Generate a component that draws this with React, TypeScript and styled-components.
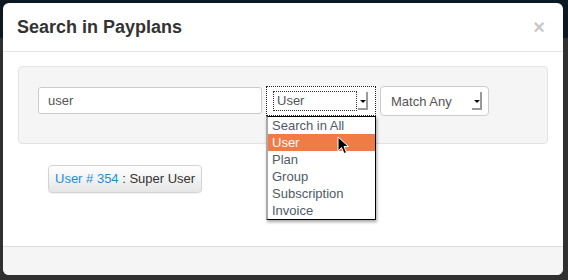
import React from "react";
import styled, { createGlobalStyle } from "styled-components";

const GlobalStyle = createGlobalStyle`
  html, body {
    margin: 0;
    padding: 0;
  }
  body {
    width: 568px;
    height: 280px;
    overflow: hidden;
    background: linear-gradient(#0c1822 0, #0c1822 38px, #303030 38px);
    font-family: "Liberation Sans", Arial, sans-serif;
  }
`;

const options = ["Search in All", "User", "Plan", "Group", "Subscription", "Invoice"];

const App: React.FC = () => {
  return (
    <>
      <GlobalStyle />
      <Modal>
        <Header>
          <Title>Search in Payplans</Title>
          <Close>×</Close>
        </Header>
        <Body>
          <Well>
            <TextInput defaultValue="user" />
            <SelectWrap>
              <FocusSelect>
                <FocusInner>User</FocusInner>
                <ArrowBox />
              </FocusSelect>
              <DropList>
                {options.map((o) => (
                  <Option key={o} active={o === "User"}>
                    {o}
                  </Option>
                ))}
              </DropList>
              <Cursor viewBox="0 0 12 19" width="12" height="19">
                <path
                  d="M1 1 L1 15 L4.5 11.5 L7 17.5 L9.5 16.5 L7 10.5 L11.5 10.5 Z"
                  fill="#000"
                  stroke="#fff"
                  strokeWidth="1"
                  strokeLinejoin="round"
                />
              </Cursor>
            </SelectWrap>
            <PlainSelect>
              <span>Match Any</span>
              <ArrowBox />
            </PlainSelect>
          </Well>
          <Result>
            <ResultLink>User # 354</ResultLink>
            <span> : Super User</span>
          </Result>
        </Body>
        <Footer />
      </Modal>
    </>
  );
};

export default App;

const Modal = styled.div`
  margin: 3px 0 0 3px;
  width: 560px;
  height: 272px;
  background: #fff;
  border-radius: 6px;
  overflow: hidden;
  display: flex;
  flex-direction: column;
`;

const Header = styled.div`
  height: 48px;
  border-bottom: 1px solid #e5e5e5;
  display: flex;
  align-items: center;
  justify-content: space-between;
  padding: 0 18px 0 14px;
`;

const Title = styled.h3`
  margin: 0;
  font-size: 18px;
  font-weight: bold;
  color: #333;
`;

const Close = styled.span`
  font-size: 20px;
  font-weight: bold;
  color: #c9c9c9;
  line-height: 1;
`;

const Body = styled.div`
  flex: 1;
  padding: 14px 15px 0 15px;
`;

const Well = styled.div`
  height: 78px;
  box-sizing: border-box;
  background: #f5f5f5;
  border: 1px solid #e3e3e3;
  border-radius: 4px;
  display: flex;
  align-items: flex-start;
  padding: 19px 0 0 19px;
`;

const TextInput = styled.input`
  width: 224px;
  height: 27px;
  margin-top: 1px;
  box-sizing: border-box;
  border: 1px solid #ccc;
  border-radius: 3px;
  padding: 0 9px;
  font-family: "Liberation Sans", Arial, sans-serif;
  font-size: 13px;
  color: #555;
  background: #fff;
  outline: none;
`;

const SelectWrap = styled.div`
  position: relative;
  margin-left: 4px;
`;

const FocusSelect = styled.div`
  width: 110px;
  height: 30px;
  box-sizing: border-box;
  border: 1px dotted #222;
  background: #fff;
  display: flex;
  align-items: center;
  padding: 0 7px 0 6px;
  gap: 1px;
`;

const FocusInner = styled.div`
  flex: 1;
  height: 20px;
  box-sizing: border-box;
  border: 1px dotted #333;
  font-size: 13px;
  line-height: 18px;
  color: #555;
  padding-left: 3px;
`;

const ArrowBox = styled.div`
  width: 10px;
  height: 18px;
  box-sizing: border-box;
  border-right: 2px solid #999;
  border-bottom: 2px solid #999;
  position: relative;
  &::after {
    content: "";
    position: absolute;
    left: 2px;
    top: 8px;
    border-left: 3px solid transparent;
    border-right: 3px solid transparent;
    border-top: 3px solid #111;
  }
`;

const PlainSelect = styled.div`
  margin-left: 4px;
  width: 109px;
  height: 30px;
  box-sizing: border-box;
  border: 1px solid #ccc;
  border-radius: 4px;
  background: #fff;
  display: flex;
  align-items: center;
  justify-content: space-between;
  padding: 0 6px 0 10px;
  font-size: 13px;
  color: #555;
`;

const DropList = styled.div`
  position: absolute;
  left: 0;
  top: 30px;
  width: 110px;
  box-sizing: border-box;
  background: #fff;
  border: 1px solid #000;
  border-left: 2px solid #aaa;
  box-shadow: 1px 2px 3px rgba(0, 0, 0, 0.35);
  padding: 0;
`;

const Option = styled.div<{ active?: boolean }>`
  height: 17px;
  line-height: 17px;
  padding-left: 4px;
  font-size: 13px;
  color: ${(p) => (p.active ? "#fff" : "#4e5a68")};
  background: ${(p) => (p.active ? "#f07b47" : "transparent")};
`;

const Cursor = styled.svg`
  position: absolute;
  left: 71px;
  top: 50px;
`;

const Result = styled.div`
  display: inline-block;
  margin: 21px 0 0 30px;
  height: 28px;
  box-sizing: border-box;
  padding: 0 6px;
  line-height: 26px;
  border: 1px solid #d4d4d4;
  border-radius: 4px;
  background: linear-gradient(#ffffff, #e6e6e6);
  font-size: 13px;
  color: #333;
  box-shadow: 0 1px 1px rgba(0, 0, 0, 0.05);
`;

const ResultLink = styled.span`
  color: #1e8fd6;
`;

const Footer = styled.div`
  height: 28px;
  border-top: 1px solid #ddd;
  background: #f5f5f5;
`;
